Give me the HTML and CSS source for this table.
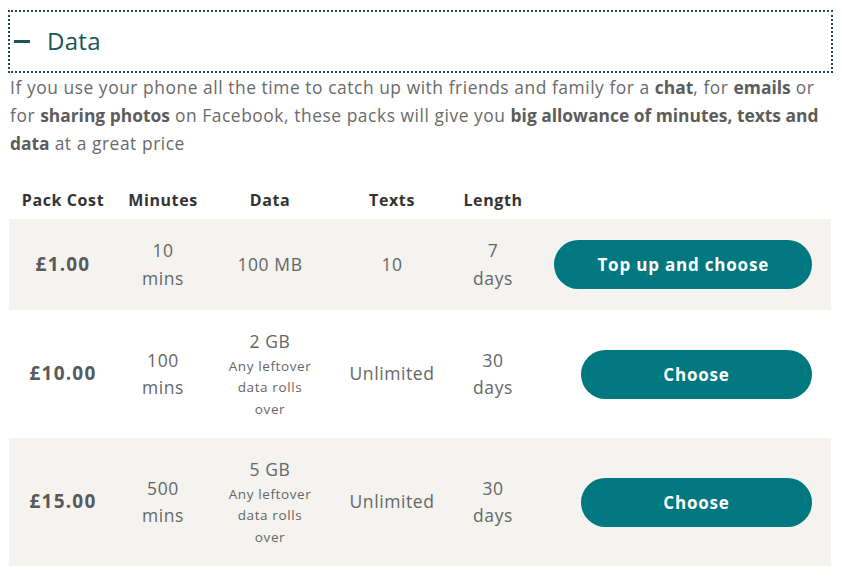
FILE: index.html
```html
<!DOCTYPE html>
<html lang="en">
<head>
<meta charset="utf-8">
<title>Data packs</title>
<link rel="stylesheet" href="styles.css">
</head>
<body>
<div class="accordion">
  <button class="acc-head" type="button">
    <span class="acc-dash"></span>
    <span class="acc-title">Data</span>
  </button>
</div>
<p class="intro">If you use your phone all the time to catch up with friends and family for a <b>chat</b>, for <b>emails</b> or for <b>sharing photos</b> on Facebook, these packs will give you <b>big allowance of minutes, texts and data</b> at a great price</p>

<div class="packs">
  <div class="row head">
    <div class="cell">Pack Cost</div>
    <div class="cell">Minutes</div>
    <div class="cell">Data</div>
    <div class="cell">Texts</div>
    <div class="cell">Length</div>
    <div class="cell"></div>
  </div>
  <div class="row shade">
    <div class="cell price">£1.00</div>
    <div class="cell narrow">10 mins</div>
    <div class="cell">100 MB</div>
    <div class="cell">10</div>
    <div class="cell narrow">7 days</div>
    <div class="cell action"><button class="btn" type="button">Top up and choose</button></div>
  </div>
  <div class="row">
    <div class="cell price">£10.00</div>
    <div class="cell narrow">100 mins</div>
    <div class="cell">2 GB<span class="note">Any leftover data rolls over</span></div>
    <div class="cell">Unlimited</div>
    <div class="cell narrow">30 days</div>
    <div class="cell action"><button class="btn" type="button">Choose</button></div>
  </div>
  <div class="row shade">
    <div class="cell price">£15.00</div>
    <div class="cell narrow">500 mins</div>
    <div class="cell">5 GB<span class="note">Any leftover data rolls over</span></div>
    <div class="cell">Unlimited</div>
    <div class="cell narrow">30 days</div>
    <div class="cell action"><button class="btn" type="button">Choose</button></div>
  </div>
</div>
</body>
</html>
```
FILE: styles.css
```css
* { box-sizing: border-box; }
body {
  margin: 10px 8px 8px 8px;
  font-family: "Open Sans", "DejaVu Sans", sans-serif;
  color: #666;
  background: #fff;
}
.accordion {
  width: 825px;
  border: 2px dotted #1d4f57;
}
.acc-head {
  display: flex;
  align-items: center;
  gap: 17px;
  width: 100%;
  height: 59px;
  padding: 0 0 0 4px;
  border: 0;
  background: none;
  font-family: inherit;
  cursor: pointer;
}
.acc-dash {
  display: block;
  width: 16px;
  height: 3px;
  background: #16565e;
}
.acc-title {
  font-size: 24px;
  color: #16565e;
  line-height: 1;
  letter-spacing: 0.3px;
  padding-bottom: 2px;
}
.intro {
  margin: 0;
  padding-left: 2px;
  font-size: 17.4px;
  line-height: 28px;
  letter-spacing: 0.55px;
  color: #6a6a6a;
}
.intro b { color: #5c5c5c; font-weight: 700; letter-spacing: 0; }

.packs {
  margin: 25px 0 0 1px;
  width: 822px;
}
.row {
  display: grid;
  grid-template-columns: 108px 92px 122px 122px 80px 1fr;
  align-items: center;
}
.row.head {
  height: 37px;
}
.row.head .cell {
  font-weight: 700;
  font-size: 16px;
  letter-spacing: 0.6px;
  color: #333;
  padding: 0;
}
.row.shade { background: #f4f3f0; }
.cell {
  text-align: center;
  font-size: 17.5px;
  line-height: 27.5px;
  letter-spacing: 0.6px;
  padding: 18px 0;
}
.cell.narrow { padding-left: 20px; padding-right: 20px; }
.price {
  font-weight: 700;
  font-size: 19px;
  letter-spacing: 1.2px;
  color: #595959;
}
.note {
  display: block;
  font-size: 13.5px;
  line-height: 21.5px;
  letter-spacing: 0.6px;
  padding: 0 16px;
}
.action {
  display: flex;
  justify-content: flex-end;
  padding-right: 19px;
}
.btn {
  min-width: 231px;
  height: 49px;
  padding: 0 43px;
  border: 0;
  border-radius: 25px;
  background: #017880;
  color: #fff;
  font-family: inherit;
  font-size: 17px;
  font-weight: 700;
  letter-spacing: 0.8px;
  cursor: pointer;
}
```
